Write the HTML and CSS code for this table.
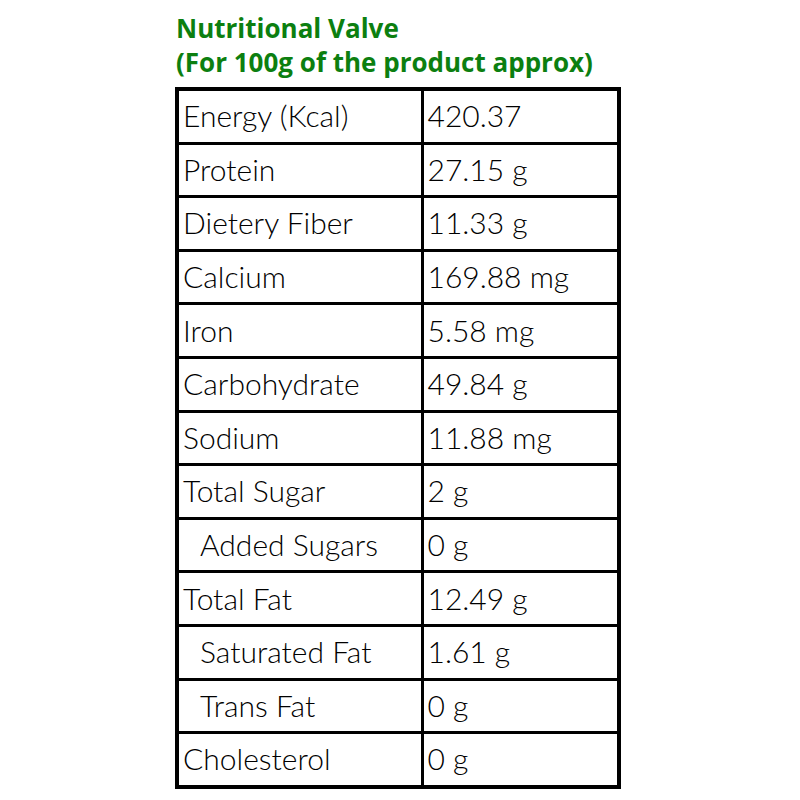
FILE: index.html
```html
<!DOCTYPE html>
<html>
<head>
<meta charset="utf-8">
<link rel="stylesheet" href="styles.css">
</head>
<body>
<div class="wrap">
  <h1 class="title">Nutritional Valve<br>(For 100g of the product approx)</h1>
  <table class="nut">
    <colgroup><col class="c1"><col class="c2"></colgroup>
    <tr><td>Energy (Kcal)</td><td>420.37</td></tr>
    <tr><td>Protein</td><td>27.15 g</td></tr>
    <tr><td>Dietery Fiber</td><td>11.33 g</td></tr>
    <tr><td>Calcium</td><td>169.88 mg</td></tr>
    <tr><td>Iron</td><td>5.58 mg</td></tr>
    <tr><td>Carbohydrate</td><td>49.84 g</td></tr>
    <tr><td>Sodium</td><td>11.88 mg</td></tr>
    <tr><td>Total Sugar</td><td>2 g</td></tr>
    <tr><td class="sub">Added Sugars</td><td>0 g</td></tr>
    <tr><td>Total Fat</td><td>12.49 g</td></tr>
    <tr><td class="sub">Saturated Fat</td><td>1.61 g</td></tr>
    <tr><td class="sub">Trans Fat</td><td>0 g</td></tr>
    <tr><td>Cholesterol</td><td>0 g</td></tr>
  </table>
</div>
</body>
</html>
```
FILE: styles.css
```css
html, body {
  margin: 0;
  padding: 0;
  background: #fff;
}
.wrap {
  padding: 11px 0 0 175px;
}
.title {
  margin: 0 0 8px 1px;
  font-family: "Open Sans", sans-serif;
  font-weight: 700;
  font-size: 26px;
  line-height: 34px;
  color: #0c7f10;
  letter-spacing: 0;
}
.nut {
  border-collapse: collapse;
  table-layout: fixed;
  border: 4px solid #000;
  width: 442px;
  font-family: Lato, sans-serif;
  font-size: 30px;
  font-weight: 300;
  color: #000;
}
.c1 { width: 245px; }
.c2 { width: 197px; }
.nut td {
  border: 3px solid #000;
  height: 48.6px;
  padding: 0 4px 2px 4px;
  vertical-align: middle;
  white-space: nowrap;
}
.nut td.sub {
  padding-left: 21px;
}
```
